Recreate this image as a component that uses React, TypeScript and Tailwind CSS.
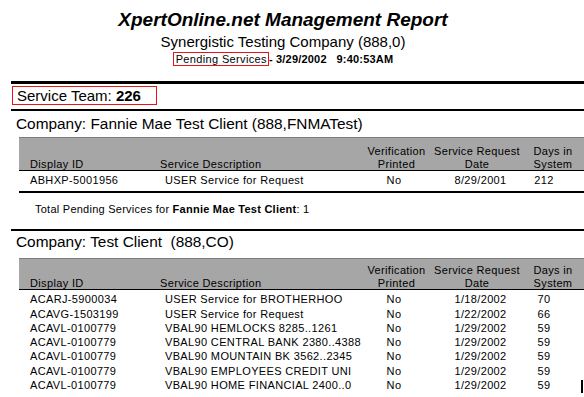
import React from 'react'

type Row = { id: string; desc: string; printed: string; date: string; days: string }

const fannieRows: Row[] = [
  { id: 'ABHXP-5001956', desc: 'USER Service for Request', printed: 'No', date: '8/29/2001', days: '212' },
]

const testRows: Row[] = [
  { id: 'ACARJ-5900034', desc: 'USER Service for BROTHERHOO', printed: 'No', date: '1/18/2002', days: '70' },
  { id: 'ACAVG-1503199', desc: 'USER Service for Request', printed: 'No', date: '1/22/2002', days: '66' },
  { id: 'ACAVL-0100779', desc: 'VBAL90 HEMLOCKS 8285..1261', printed: 'No', date: '1/29/2002', days: '59' },
  { id: 'ACAVL-0100779', desc: 'VBAL90 CENTRAL BANK 2380..4388', printed: 'No', date: '1/29/2002', days: '59' },
  { id: 'ACAVL-0100779', desc: 'VBAL90 MOUNTAIN BK 3562..2345', printed: 'No', date: '1/29/2002', days: '59' },
  { id: 'ACAVL-0100779', desc: 'VBAL90 EMPLOYEES CREDIT UNI', printed: 'No', date: '1/29/2002', days: '59' },
  { id: 'ACAVL-0100779', desc: 'VBAL90 HOME FINANCIAL 2400..0', printed: 'No', date: '1/29/2002', days: '59' },
]

const cols = 'grid grid-cols-[141px_203px_67px_94px_1fr]'

function ReportTable({ rows, headH }: { rows: Row[]; headH: string }) {
  return (
    <div className="ml-[19px] text-[11px] tracking-[0.35px] text-black">
      {/* HEADER - text sits on the rule, descenders cross it */}
      <div
        className={`${cols} ${headH} items-end bg-[#a6a6a6] border-t border-t-[#7c7c7c] border-b border-b-black leading-[13px]`}
      >
        <div className="pl-[11px] translate-y-[1px]">Display ID</div>
        <div className="translate-y-[1px]">Service Description</div>
        <div className="text-center translate-y-[1px]">
          Verification
          <br />
          Printed
        </div>
        <div className="text-center translate-y-[1px]">
          Service Request
          <br />
          Date
        </div>
        <div className="text-center pr-[2px] translate-y-[1px]">
          Days in
          <br />
          System
        </div>
      </div>

      {/* ROWS */}
      <div className="mt-[2px]">
        {rows.map((r, i) => (
          <div key={i} className={`${cols} leading-[14.3px] whitespace-nowrap`}>
            <div className="pl-[11px]">{r.id}</div>
            <div className="pl-[5px]">{r.desc}</div>
            <div className="text-center pr-[5px]">{r.printed}</div>
            <div className="text-center pl-[7px]">{r.date}</div>
            <div className="text-center pr-[20px]">{r.days}</div>
          </div>
        ))}
      </div>
    </div>
  )
}

export default function App() {
  return (
    <div className="relative w-[584px] h-[397px] overflow-hidden bg-white text-black font-['Liberation_Sans',Arial,sans-serif]">
      {/* TITLE BLOCK */}
      <div className="w-[566px] pt-[9px] text-center">
        <div className="text-[19px] leading-[22px] font-bold italic">XpertOnline.net Management Report</div>
        <div className="mt-[2px] text-[15px] leading-[17px]">Synergistic Testing Company (888,0)</div>
        <div className="mt-[2px] h-[14px] flex justify-center items-start text-[11px] leading-[12px] whitespace-pre">
          <span className="border border-[#e81414] pl-[2px] pr-[1px] h-[14px] tracking-[0.35px]">Pending Services</span>
          <span className="font-bold mt-[1px] tracking-[0.2px]">- 3/29/2002   9:40:53AM</span>
        </div>
      </div>

      <div className="mt-[15px] ml-[11px] h-[3px] bg-black" />

      {/* SERVICE TEAM */}
      <div className="mt-[2px] ml-[12px] w-[145px] h-[19px] border border-[#e81414] pl-[4px] text-[15px] leading-[17px]">
        Service Team: <span className="font-bold">226</span>
      </div>

      <div className="mt-[4px] ml-[11px] h-[2px] bg-black" />

      {/* COMPANY 1 */}
      <div className="mt-[4px] ml-[16px] text-[15.4px] leading-[17px]">
        Company: Fannie Mae Test Client (888,FNMATest)
      </div>
      <div className="mt-[5px]">
        <ReportTable rows={fannieRows} headH="h-[34px]" />
      </div>
      <div className="mt-[4px] ml-[19px] h-[2px] bg-black" />

      <div className="mt-[10px] ml-[35px] text-[11px] leading-[13px] tracking-[0.25px]">
        Total Pending Services for <span className="font-bold">Fannie Mae Test Client</span>: 1
      </div>

      <div className="mt-[13px] ml-[11px] h-[2px] bg-black" />

      {/* COMPANY 2 */}
      <div className="mt-[2px] ml-[16px] text-[15.4px] leading-[17px] whitespace-pre">
        Company: Test Client  (888,CO)
      </div>
      <div className="mt-[8px]">
        <ReportTable rows={testRows} headH="h-[32px]" />
      </div>

      {/* cursor mark */}
      <div className="absolute left-[581px] top-[380px] w-[2px] h-[13px] bg-black" />
    </div>
  )
}
